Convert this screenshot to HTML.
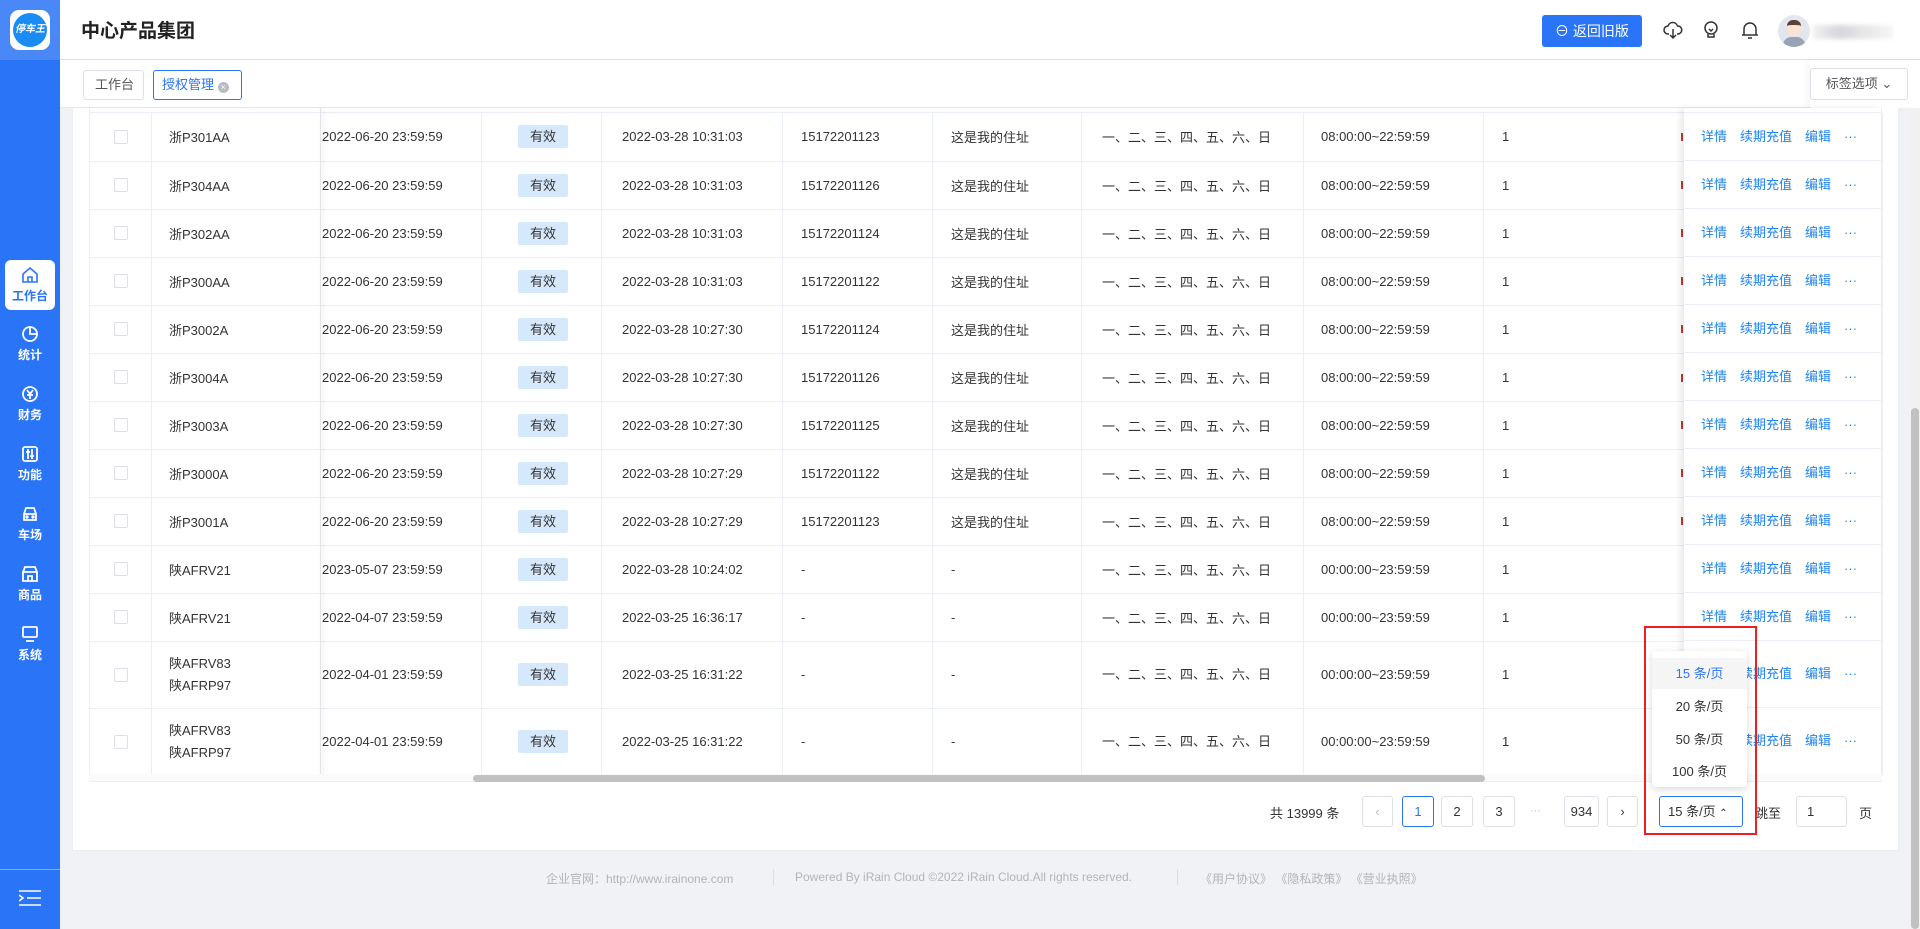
<!DOCTYPE html>
<html><head><meta charset="utf-8"><style>
*{box-sizing:border-box;margin:0;padding:0}
body{width:1920px;height:929px;overflow:hidden;background:#f0f2f5;font-family:"Liberation Sans","Noto Sans CJK SC",sans-serif;font-size:13px;color:#333;position:relative}
.abs{position:absolute}
#side{left:0;top:0;width:60px;height:929px;background:#2a75f7}
#logo{left:0;top:0;width:60px;height:60px;background:#4a88f8}
.mi{position:absolute;left:0;width:60px;text-align:center;color:#fff;font-size:12px;font-weight:bold}
.mi svg{display:block;margin:0 auto 3px}
#hdr{left:60px;top:0;width:1860px;height:60px;background:#fff;border-bottom:1px solid #dcdfe6}
#tabs{left:60px;top:60px;width:1860px;height:48px;background:#fff;border-bottom:1px solid #e4e7ed}
.tab{position:absolute;top:10px;height:30px;border:1px solid #dcdfe6;border-radius:3px;line-height:28px;padding:0 10px;font-size:13px;color:#555;white-space:nowrap}
#card{left:72px;top:108px;width:1827px;height:743px;background:#fff;border:1px solid #ebeef5;border-top:none}
table{border-collapse:collapse;table-layout:fixed;position:absolute;left:89px;top:113px}
td{border-bottom:1px solid #ebeef5;border-right:1px solid #ebeef5;white-space:nowrap;overflow:hidden;vertical-align:middle;font-size:13px;color:#333}
tr.n td{height:48px}tr.t td{height:67px;line-height:22px}
.cb{width:14px;height:14px;border:1px solid #dcdfe6;border-radius:2px;margin-left:24px;background:#fff}
.tag{display:inline-block;width:50px;height:23px;line-height:23px;text-align:center;background:#d5e8fc;border-radius:2px}
#fixr{left:1684px;top:108px;width:198px;height:666px;background:#fff;box-shadow:-4px 0 6px rgba(0,0,0,.08)}
.act{height:48px;line-height:47px;padding-left:17px;font-size:13px;color:#1f84ef;border-bottom:1px solid #ebeef5;border-right:1px solid #ebeef5;white-space:nowrap}
.act.t{height:67px;line-height:66px}
.act span{margin-right:13px}
#fixl{left:320px;top:108px;width:1px;height:666px;box-shadow:2px 0 5px rgba(0,0,0,.18);background:#e5e5e5}
.pg{position:absolute;top:796px;height:31px;border:1px solid #dcdfe6;border-radius:3px;text-align:center;line-height:29px;font-size:13px;background:#fff}
.foot{position:absolute;top:870px;font-size:12px;color:#b4b4b4}
.rm{position:absolute;left:1681px;width:2px;height:8px;background:#c0392b}
</style></head><body>
<div id="side" class="abs">
 <div id="logo" class="abs"><div class="abs" style="left:10px;top:10px;width:40px;height:40px;background:#fff;border-radius:9px"><div class="abs" style="left:3px;top:3px;width:34px;height:34px;border-radius:50%;background:#1a8cf5;color:#fff;font-size:10px;font-style:italic;font-weight:bold;line-height:34px;text-align:center">停车王</div></div></div>
 <div class="abs" style="left:5px;top:260px;width:50px;height:50px;background:#fff;border-radius:6px"></div>
 <div class="mi" style="top:266px;color:#2a75f7"><svg width="18" height="18" viewBox="0 0 18 18" fill="none" stroke="#2a75f7" stroke-width="1.6"><path d="M2 8L9 2l7 6v8H2z M7 16v-5h4v5"/></svg>工作台</div>
 <div class="mi" style="top:325px"><svg width="18" height="18" viewBox="0 0 18 18" fill="none" stroke="#fff" stroke-width="1.8"><circle cx="9" cy="9" r="7"/><path d="M9 2v7h7"/></svg>统计</div>
 <div class="mi" style="top:385px"><svg width="18" height="18" viewBox="0 0 18 18" fill="none" stroke="#fff" stroke-width="1.8"><circle cx="9" cy="9" r="7"/><path d="M6 5l3 4 3-4M9 9v5M6 10h6"/></svg>财务</div>
 <div class="mi" style="top:445px"><svg width="18" height="18" viewBox="0 0 18 18" fill="none" stroke="#fff" stroke-width="1.8"><rect x="2" y="2" width="14" height="14" rx="2"/><path d="M7 4v10M11 4v10M5 7h4M9 11h4"/></svg>功能</div>
 <div class="mi" style="top:505px"><svg width="18" height="18" viewBox="0 0 18 18" fill="none" stroke="#fff" stroke-width="1.8"><path d="M3 9l2-6h8l2 6v6H3z M3 9h12"/><circle cx="6" cy="12" r=".8"/><circle cx="12" cy="12" r=".8"/></svg>车场</div>
 <div class="mi" style="top:565px"><svg width="18" height="18" viewBox="0 0 18 18" fill="none" stroke="#fff" stroke-width="1.8"><path d="M2 7l2-5h10l2 5v9H2z M2 7h14M7 16v-5h4v5"/></svg>商品</div>
 <div class="mi" style="top:625px"><svg width="18" height="18" viewBox="0 0 18 18" fill="none" stroke="#fff" stroke-width="1.8"><rect x="2" y="2" width="14" height="10" rx="1"/><path d="M5 16h8"/></svg>系统</div>
 <div class="abs" style="left:0;top:869px;width:60px;height:1px;background:rgba(255,255,255,.4)"></div>
 <svg class="abs" style="left:19px;top:889px" width="22" height="18" viewBox="0 0 22 18" stroke="#fff" stroke-width="1.6"><path d="M0 2h22M8 9h14M0 16h22M0 6l4 3-4 3" fill="none"/></svg>
</div>
<div id="hdr" class="abs">
 <div class="abs" style="left:21px;top:16px;font-size:19px;font-weight:bold;color:#222">中心产品集团</div>
 <div class="abs" style="left:1482px;top:15px;width:100px;height:32px;background:#2a75f7;border-radius:3px;color:#fff;font-size:14px;line-height:32px;text-align:center">⊖ 返回旧版</div>
 <svg class="abs" style="left:1603px;top:20px" width="20" height="20" viewBox="0 0 20 20" fill="none" stroke="#333" stroke-width="1.5"><path d="M6 14H5a4 4 0 010-8 5 5 0 019.5 0A4 4 0 0115 14h-1M10 9v9M7 15l3 3 3-3"/></svg>
 <svg class="abs" style="left:1641px;top:20px" width="20" height="20" viewBox="0 0 20 20" fill="none" stroke="#333" stroke-width="1.5"><circle cx="10" cy="8" r="6"/><path d="M7 14v3h6v-3M8 9l2 2 2-2"/></svg>
 <svg class="abs" style="left:1680px;top:20px" width="20" height="20" viewBox="0 0 20 20" fill="none" stroke="#333" stroke-width="1.5"><path d="M4 15V9a6 6 0 0112 0v6zM2 15h16M8 18h4"/></svg>
 <div class="abs" style="left:1718px;top:15px;width:32px;height:32px;border-radius:50%;background:#e3e6ee;overflow:hidden"><div class="abs" style="left:9px;top:5px;width:14px;height:16px;background:#fbe3d3;border-radius:6px;border-top:5px solid #5a4037"></div><div class="abs" style="left:5px;top:22px;width:22px;height:12px;background:#9aa3b5;border-radius:8px 8px 0 0"></div></div>
 <div class="abs" style="left:1753px;top:25px;width:80px;height:14px;background:linear-gradient(90deg,#f2f2f2,#d7d7dc,#e8e8ea,#f5f5f5);filter:blur(2px)"></div>
</div>
<div id="tabs" class="abs">
 <div class="tab" style="left:23px;width:61px;padding:0 11px">工作台</div>
 <div class="tab" style="left:93px;width:89px;border-color:#2a75f7;color:#2a75f7;padding:0 8px">授权管理 <span style="display:inline-block;width:11px;height:11px;border-radius:50%;background:#b9bcc2;color:#fff;font-size:9px;line-height:11px;text-align:center;vertical-align:-1px">×</span></div>
 <div class="abs" style="left:1750px;top:0;width:110px;height:48px;background:#fff;box-shadow:-3px 0 6px rgba(0,0,0,.04)"></div>
 <div class="tab" style="left:1750px;width:98px;top:8px;height:32px;line-height:30px;text-align:center">标签选项 ⌄</div>
</div>
<div id="card" class="abs"></div>
<div class="abs" style="left:89px;top:108px;width:1793px;height:5px;border-left:1px solid #ebeef5;border-bottom:1px solid #ebeef5"></div>
<table>
<colgroup><col style="width:62px"><col style="width:169px"><col style="width:161px"><col style="width:120px"><col style="width:181px"><col style="width:150px"><col style="width:149px"><col style="width:222px"><col style="width:180px"><col style="width:399px"></colgroup>
<tbody>
<tr class="n"><td style="border-left:1px solid #ebeef5"><div class="cb"></div></td><td style="padding-left:17px">浙P301AA</td><td style="padding-left:1px">2022-06-20 23:59:59</td><td style="padding-left:36px"><span class="tag">有效</span></td><td style="padding-left:20px">2022-03-28 10:31:03</td><td style="padding-left:18px">15172201123</td><td style="padding-left:18px">这是我的住址</td><td style="padding-left:20px">一、二、三、四、五、六、日</td><td style="padding-left:17px">08:00:00~22:59:59</td><td style="padding-left:18px">1</td></tr>
<tr class="n"><td style="border-left:1px solid #ebeef5"><div class="cb"></div></td><td style="padding-left:17px">浙P304AA</td><td style="padding-left:1px">2022-06-20 23:59:59</td><td style="padding-left:36px"><span class="tag">有效</span></td><td style="padding-left:20px">2022-03-28 10:31:03</td><td style="padding-left:18px">15172201126</td><td style="padding-left:18px">这是我的住址</td><td style="padding-left:20px">一、二、三、四、五、六、日</td><td style="padding-left:17px">08:00:00~22:59:59</td><td style="padding-left:18px">1</td></tr>
<tr class="n"><td style="border-left:1px solid #ebeef5"><div class="cb"></div></td><td style="padding-left:17px">浙P302AA</td><td style="padding-left:1px">2022-06-20 23:59:59</td><td style="padding-left:36px"><span class="tag">有效</span></td><td style="padding-left:20px">2022-03-28 10:31:03</td><td style="padding-left:18px">15172201124</td><td style="padding-left:18px">这是我的住址</td><td style="padding-left:20px">一、二、三、四、五、六、日</td><td style="padding-left:17px">08:00:00~22:59:59</td><td style="padding-left:18px">1</td></tr>
<tr class="n"><td style="border-left:1px solid #ebeef5"><div class="cb"></div></td><td style="padding-left:17px">浙P300AA</td><td style="padding-left:1px">2022-06-20 23:59:59</td><td style="padding-left:36px"><span class="tag">有效</span></td><td style="padding-left:20px">2022-03-28 10:31:03</td><td style="padding-left:18px">15172201122</td><td style="padding-left:18px">这是我的住址</td><td style="padding-left:20px">一、二、三、四、五、六、日</td><td style="padding-left:17px">08:00:00~22:59:59</td><td style="padding-left:18px">1</td></tr>
<tr class="n"><td style="border-left:1px solid #ebeef5"><div class="cb"></div></td><td style="padding-left:17px">浙P3002A</td><td style="padding-left:1px">2022-06-20 23:59:59</td><td style="padding-left:36px"><span class="tag">有效</span></td><td style="padding-left:20px">2022-03-28 10:27:30</td><td style="padding-left:18px">15172201124</td><td style="padding-left:18px">这是我的住址</td><td style="padding-left:20px">一、二、三、四、五、六、日</td><td style="padding-left:17px">08:00:00~22:59:59</td><td style="padding-left:18px">1</td></tr>
<tr class="n"><td style="border-left:1px solid #ebeef5"><div class="cb"></div></td><td style="padding-left:17px">浙P3004A</td><td style="padding-left:1px">2022-06-20 23:59:59</td><td style="padding-left:36px"><span class="tag">有效</span></td><td style="padding-left:20px">2022-03-28 10:27:30</td><td style="padding-left:18px">15172201126</td><td style="padding-left:18px">这是我的住址</td><td style="padding-left:20px">一、二、三、四、五、六、日</td><td style="padding-left:17px">08:00:00~22:59:59</td><td style="padding-left:18px">1</td></tr>
<tr class="n"><td style="border-left:1px solid #ebeef5"><div class="cb"></div></td><td style="padding-left:17px">浙P3003A</td><td style="padding-left:1px">2022-06-20 23:59:59</td><td style="padding-left:36px"><span class="tag">有效</span></td><td style="padding-left:20px">2022-03-28 10:27:30</td><td style="padding-left:18px">15172201125</td><td style="padding-left:18px">这是我的住址</td><td style="padding-left:20px">一、二、三、四、五、六、日</td><td style="padding-left:17px">08:00:00~22:59:59</td><td style="padding-left:18px">1</td></tr>
<tr class="n"><td style="border-left:1px solid #ebeef5"><div class="cb"></div></td><td style="padding-left:17px">浙P3000A</td><td style="padding-left:1px">2022-06-20 23:59:59</td><td style="padding-left:36px"><span class="tag">有效</span></td><td style="padding-left:20px">2022-03-28 10:27:29</td><td style="padding-left:18px">15172201122</td><td style="padding-left:18px">这是我的住址</td><td style="padding-left:20px">一、二、三、四、五、六、日</td><td style="padding-left:17px">08:00:00~22:59:59</td><td style="padding-left:18px">1</td></tr>
<tr class="n"><td style="border-left:1px solid #ebeef5"><div class="cb"></div></td><td style="padding-left:17px">浙P3001A</td><td style="padding-left:1px">2022-06-20 23:59:59</td><td style="padding-left:36px"><span class="tag">有效</span></td><td style="padding-left:20px">2022-03-28 10:27:29</td><td style="padding-left:18px">15172201123</td><td style="padding-left:18px">这是我的住址</td><td style="padding-left:20px">一、二、三、四、五、六、日</td><td style="padding-left:17px">08:00:00~22:59:59</td><td style="padding-left:18px">1</td></tr>
<tr class="n"><td style="border-left:1px solid #ebeef5"><div class="cb"></div></td><td style="padding-left:17px">陕AFRV21</td><td style="padding-left:1px">2023-05-07 23:59:59</td><td style="padding-left:36px"><span class="tag">有效</span></td><td style="padding-left:20px">2022-03-28 10:24:02</td><td style="padding-left:18px">-</td><td style="padding-left:18px">-</td><td style="padding-left:20px">一、二、三、四、五、六、日</td><td style="padding-left:17px">00:00:00~23:59:59</td><td style="padding-left:18px">1</td></tr>
<tr class="n"><td style="border-left:1px solid #ebeef5"><div class="cb"></div></td><td style="padding-left:17px">陕AFRV21</td><td style="padding-left:1px">2022-04-07 23:59:59</td><td style="padding-left:36px"><span class="tag">有效</span></td><td style="padding-left:20px">2022-03-25 16:36:17</td><td style="padding-left:18px">-</td><td style="padding-left:18px">-</td><td style="padding-left:20px">一、二、三、四、五、六、日</td><td style="padding-left:17px">00:00:00~23:59:59</td><td style="padding-left:18px">1</td></tr>
<tr class="t"><td style="border-left:1px solid #ebeef5"><div class="cb"></div></td><td style="padding-left:17px">陕AFRV83<br>陕AFRP97</td><td style="padding-left:1px">2022-04-01 23:59:59</td><td style="padding-left:36px"><span class="tag">有效</span></td><td style="padding-left:20px">2022-03-25 16:31:22</td><td style="padding-left:18px">-</td><td style="padding-left:18px">-</td><td style="padding-left:20px">一、二、三、四、五、六、日</td><td style="padding-left:17px">00:00:00~23:59:59</td><td style="padding-left:18px">1</td></tr>
<tr class="t"><td style="border-left:1px solid #ebeef5"><div class="cb"></div></td><td style="padding-left:17px">陕AFRV83<br>陕AFRP97</td><td style="padding-left:1px">2022-04-01 23:59:59</td><td style="padding-left:36px"><span class="tag">有效</span></td><td style="padding-left:20px">2022-03-25 16:31:22</td><td style="padding-left:18px">-</td><td style="padding-left:18px">-</td><td style="padding-left:20px">一、二、三、四、五、六、日</td><td style="padding-left:17px">00:00:00~23:59:59</td><td style="padding-left:18px">1</td></tr>
</tbody></table>
<div class="rm" style="top:133px"></div><div class="rm" style="top:181px"></div><div class="rm" style="top:229px"></div><div class="rm" style="top:277px"></div><div class="rm" style="top:325px"></div><div class="rm" style="top:374px"></div><div class="rm" style="top:421px"></div><div class="rm" style="top:469px"></div><div class="rm" style="top:517px"></div>
<div id="fixl" class="abs"></div>
<div id="fixr" class="abs">
 <div class="act" style="height:5px"></div>
 <div class="act"><span>详情</span><span>续期充值</span><span>编辑</span>···</div>
 <div class="act"><span>详情</span><span>续期充值</span><span>编辑</span>···</div>
 <div class="act"><span>详情</span><span>续期充值</span><span>编辑</span>···</div>
 <div class="act"><span>详情</span><span>续期充值</span><span>编辑</span>···</div>
 <div class="act"><span>详情</span><span>续期充值</span><span>编辑</span>···</div>
 <div class="act"><span>详情</span><span>续期充值</span><span>编辑</span>···</div>
 <div class="act"><span>详情</span><span>续期充值</span><span>编辑</span>···</div>
 <div class="act"><span>详情</span><span>续期充值</span><span>编辑</span>···</div>
 <div class="act"><span>详情</span><span>续期充值</span><span>编辑</span>···</div>
 <div class="act"><span>详情</span><span>续期充值</span><span>编辑</span>···</div>
 <div class="act"><span>详情</span><span>续期充值</span><span>编辑</span>···</div>
 <div class="act t"><span>详情</span><span>续期充值</span><span>编辑</span>···</div>
 <div class="act t"><span>详情</span><span>续期充值</span><span>编辑</span>···</div>
</div>
<div class="abs" style="left:89px;top:774px;width:1793px;height:8px;background:#fafafa;border-bottom:1px solid #ebeef5"></div>
<div class="abs" style="left:473px;top:775px;width:1012px;height:7px;background:#c1c1c1;border-radius:4px"></div>
<div class="abs" style="left:1270px;top:803px;font-size:13px">共 13999 条</div>
<div class="pg" style="left:1362px;width:31px;color:#bbb">‹</div>
<div class="pg" style="left:1402px;width:32px;border-color:#2a75f7;color:#2a75f7">1</div>
<div class="pg" style="left:1441px;width:32px">2</div>
<div class="pg" style="left:1483px;width:32px">3</div>
<div class="abs" style="left:1530px;top:805px;color:#bbb;font-size:11px">···</div>
<div class="pg" style="left:1564px;width:35px">934</div>
<div class="pg" style="left:1607px;width:31px">›</div>
<div class="pg" style="left:1659px;width:84px;border-color:#2a75f7;text-align:left;padding-left:8px">15 条/页 <span style="font-size:10px">⌃</span></div>
<div class="abs" style="left:1755px;top:803px">跳至</div>
<div class="pg" style="left:1796px;width:51px;text-align:left;padding-left:10px">1</div>
<div class="abs" style="left:1859px;top:803px">页</div>
<div class="abs" style="left:1652px;top:651px;width:95px;height:136px;background:#fff;border-radius:4px;box-shadow:0 2px 8px rgba(0,0,0,.15)">
 <div class="abs" style="left:0;top:7px;width:95px;height:31px;background:#f5f5f5;color:#2a75f7;line-height:31px;text-align:center;font-size:13px">15 条/页</div>
 <div class="abs" style="left:0;top:40px;width:95px;line-height:31px;text-align:center;font-size:13px">20 条/页</div>
 <div class="abs" style="left:0;top:73px;width:95px;line-height:31px;text-align:center;font-size:13px">50 条/页</div>
 <div class="abs" style="left:0;top:105px;width:95px;line-height:31px;text-align:center;font-size:13px">100 条/页</div>
</div>
<div class="abs" style="left:1644px;top:626px;width:113px;height:209px;border:2px solid #f01e1e"></div>
<div class="foot" style="left:546px">企业官网：http://www.irainone.com</div>
<div class="abs" style="left:773px;top:869px;width:1px;height:16px;background:#ddd"></div>
<div class="foot" style="left:795px">Powered By iRain Cloud ©2022 iRain Cloud.All rights reserved.</div>
<div class="abs" style="left:1177px;top:869px;width:1px;height:16px;background:#ddd"></div>
<div class="foot" style="left:1200px">《用户协议》 《隐私政策》 《营业执照》</div>
<div class="abs" style="left:1910px;top:108px;width:10px;height:821px;background:#f1f1f1"></div>
<div class="abs" style="left:1911px;top:408px;width:8px;height:521px;background:#c1c1c1;border-radius:4px"></div>
</body></html>
